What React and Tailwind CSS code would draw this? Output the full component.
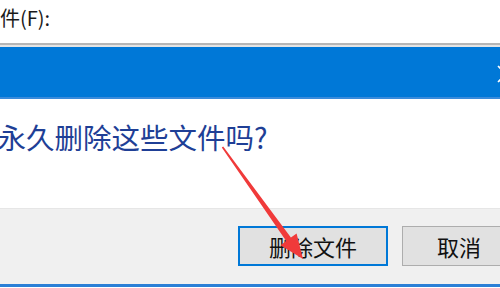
const CJK = { fontFamily: '"Noto Sans CJK SC", "Noto Sans", sans-serif' };

function CloseGlyph() {
  return (
    <svg className="absolute left-[497px] top-[18px]" width="18" height="18" viewBox="0 0 18 18">
      <path d="M1 1 L17 17 M17 1 L1 17" stroke="#ffffff" strokeWidth="1.6" fill="none" />
    </svg>
  );
}

function Arrow() {
  return (
    <svg className="absolute inset-0 pointer-events-none" width="500" height="288" viewBox="0 0 500 288">
      <polygon
        fill="#f03a3a"
        points="223.2,146.5 290.9,237.6 296.6,233.5 303,259 280.5,245.2 286.2,241.1 221.8,147.5"
      />
    </svg>
  );
}

export default function App() {
  return (
    <div className="relative w-[500px] h-[288px] overflow-hidden bg-white" style={CJK}>
      {/* window behind the dialog */}
      <div className="h-[43px] bg-white">
        <div className="pt-[4px] text-[20px] leading-[28px] text-[#1a1a1a] whitespace-nowrap ml-[-20px]">
          文件(F):
        </div>
      </div>
      <div className="h-[2px] bg-[#b6b6b6]" />
      <div className="h-[2px] bg-[#e4e4e4]" />

      {/* title bar */}
      <div className="relative h-[52px] bg-[#0078d7] border-b-2 border-[#3a8bdb]">
        <CloseGlyph />
      </div>

      {/* content */}
      <div className="h-[109px] bg-white pt-[18px]">
        <div className="ml-[-31px] text-[28.5px] leading-[40px] text-[#1f3f96] whitespace-nowrap">
          要永久删除这些文件吗?
        </div>
      </div>

      {/* footer */}
      <div className="h-[76px] bg-[#f0f0f0] border-t border-[#e6e6e6] flex gap-[14px] pl-[238px] pt-[17px]">
        <button className="w-[150px] h-[40px] shrink-0 bg-[#e1e1e1] border-2 border-[#0078d7] text-[22px] leading-none text-[#111111]">
          删除文件
        </button>
        <button className="w-[114px] h-[40px] shrink-0 bg-[#e1e1e1] border border-[#adadad] text-[22px] leading-none text-[#111111]">
          取消
        </button>
      </div>
      <div className="h-[3px] bg-[#2b7fd6]" />

      <Arrow />
    </div>
  );
}
